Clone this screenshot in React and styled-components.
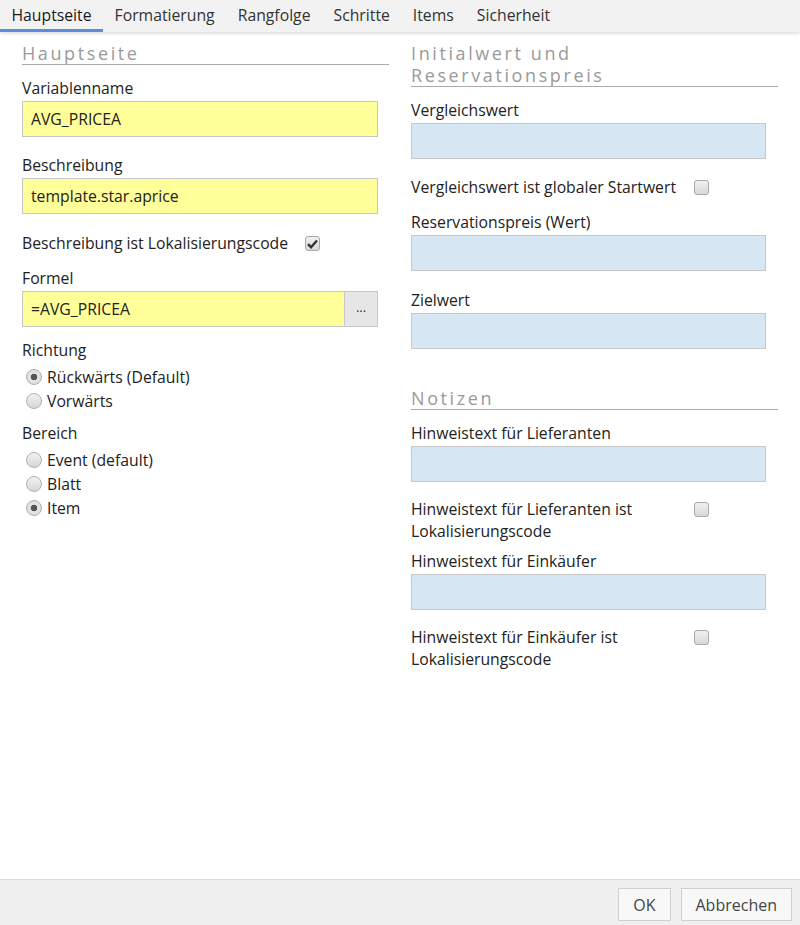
import React from 'react';
import styled, { createGlobalStyle } from 'styled-components';

const GlobalStyle = createGlobalStyle`
  html, body { margin: 0; padding: 0; }
  body {
    font-family: "Open Sans", "Liberation Sans", sans-serif;
    font-size: 15.75px;
    color: #333;
    background: #fff;
  }
`;

const tabs = ['Hauptseite', 'Formatierung', 'Rangfolge', 'Schritte', 'Items', 'Sicherheit'];

const App = () => {
  return (
    <Page>
      <GlobalStyle />
      <TabBar>
        {tabs.map((t, i) => (
          <Tab key={t} active={i === 0}>{t}</Tab>
        ))}
      </TabBar>

      <Content>
        <Column>
          <SectionTitle><TitleText>Hauptseite</TitleText></SectionTitle>

          <Label top={13}>Variablenname</Label>
          <TextInput tone="yellow" defaultValue="AVG_PRICEA" />

          <Label top={18}>Beschreibung</Label>
          <TextInput tone="yellow" defaultValue="template.star.aprice" />

          <CheckRow top={18}>
            <CheckLabel>Beschreibung ist Lokalisierungscode</CheckLabel>
            <CheckBox checked />
          </CheckRow>

          <Label top={14}>Formel</Label>
          <InputGroup>
            <GroupInput defaultValue="=AVG_PRICEA" />
            <DotsButton>...</DotsButton>
          </InputGroup>

          <Label top={13}>Richtung</Label>
          <RadioList>
            <RadioItem><Radio checked />Rückwärts (Default)</RadioItem>
            <RadioItem><Radio />Vorwärts</RadioItem>
          </RadioList>

          <Label top={10}>Bereich</Label>
          <RadioList>
            <RadioItem><Radio />Event (default)</RadioItem>
            <RadioItem><Radio />Blatt</RadioItem>
            <RadioItem><Radio checked />Item</RadioItem>
          </RadioList>
        </Column>

        <Column>
          <SectionTitle><TitleText>Initialwert und Reservationspreis</TitleText></SectionTitle>

          <Label top={13}>Vergleichswert</Label>
          <TextInput tone="blue" />

          <CheckRow top={17}>
            <CheckLabel>Vergleichswert ist globaler Startwert</CheckLabel>
            <CheckBox />
          </CheckRow>

          <Label top={14}>Reservationspreis (Wert)</Label>
          <TextInput tone="blue" />

          <Label top={19}>Zielwert</Label>
          <TextInput tone="blue" />

          <SectionTitle top={38}><TitleText>Notizen</TitleText></SectionTitle>

          <Label top={13}>Hinweistext für Lieferanten</Label>
          <TextInput tone="blue" />

          <CheckRow top={16}>
            <CheckLabel>Hinweistext für Lieferanten ist Lokalisierungscode</CheckLabel>
            <CheckBox />
          </CheckRow>

          <Label top={9}>Hinweistext für Einkäufer</Label>
          <TextInput tone="blue" />

          <CheckRow top={16}>
            <CheckLabel>Hinweistext für Einkäufer ist Lokalisierungscode</CheckLabel>
            <CheckBox />
          </CheckRow>
        </Column>
      </Content>

      <Footer>
        <FooterButton>OK</FooterButton>
        <FooterButton>Abbrechen</FooterButton>
      </Footer>
    </Page>
  );
};

const CheckBox = ({ checked }) => (
  <Box>
    {checked && (
      <svg width="11" height="10" viewBox="0 0 11 10">
        <path d="M1 5.2 L4 8.2 L10 1.5" fill="none" stroke="#333" strokeWidth="2.4" />
      </svg>
    )}
  </Box>
);

export default App;

const Page = styled.div`
  height: 925px;
  display: flex;
  flex-direction: column;
  overflow: hidden;
`;

const TabBar = styled.div`
  display: flex;
  height: 32px;
  background: #f2f2f2;
  box-shadow: 0 1px 4px rgba(0, 0, 0, 0.18);
  position: relative;
  z-index: 1;
`;

const Tab = styled.div`
  padding: 0 11.5px;
  line-height: 30px;
  font-size: 15.75px;
  color: ${(p) => (p.active ? '#1a1a1a' : '#333')};
  border-bottom: 3px solid ${(p) => (p.active ? '#5b8ed7' : 'transparent')};
  height: 29px;
  cursor: pointer;
`;

const Content = styled.div`
  flex: 1;
  display: grid;
  grid-template-columns: 367px 367px;
  column-gap: 22px;
  padding: 10px 22px 0;
`;

const Column = styled.div`
  display: flex;
  flex-direction: column;
`;

const SectionTitle = styled.div`
  margin-top: ${(p) => p.top || 0}px;
  font-size: 18px;
  line-height: 22px;
  letter-spacing: 2.6px;
  color: #9a9a9a;
  border-bottom: 1px solid #aaa;
`;

const TitleText = styled.span`
  display: block;
  max-width: 310px;
`;

const Label = styled.div`
  margin-top: ${(p) => p.top || 0}px;
  margin-bottom: 3px;
  line-height: 20px;
  color: #222;
`;

const TextInput = styled.input`
  box-sizing: border-box;
  width: ${(p) => (p.tone === 'yellow' ? 356 : 355)}px;
  height: 36px;
  padding: 0 8px;
  font-family: inherit;
  font-size: 15.75px;
  color: #222;
  border: 1px solid #c8c8c8;
  background: ${(p) => (p.tone === 'yellow' ? '#ffff99' : '#d6e6f3')};
  outline: none;
`;

const InputGroup = styled.div`
  display: flex;
  width: 356px;
  height: 36px;
`;

const GroupInput = styled.input`
  box-sizing: border-box;
  flex: 1;
  min-width: 0;
  height: 36px;
  padding: 0 8px;
  font-family: inherit;
  font-size: 15.75px;
  color: #222;
  border: 1px solid #c8c8c8;
  border-right: none;
  background: #ffff99;
  outline: none;
`;

const DotsButton = styled.button`
  box-sizing: border-box;
  width: 34px;
  height: 36px;
  border: 1px solid #c8c8c8;
  background: #e6e6e6;
  font-family: inherit;
  font-size: 13px;
  color: #333;
  padding: 0 0 4px;
`;

const CheckRow = styled.div`
  margin-top: ${(p) => p.top || 0}px;
  display: flex;
  align-items: flex-start;
`;

const CheckLabel = styled.div`
  width: 272px;
  line-height: 22px;
  color: #222;
`;

const Box = styled.span`
  box-sizing: border-box;
  width: 15px;
  height: 15px;
  margin: 4px 0 0 11px;
  border: 1px solid #a8a8a8;
  border-radius: 3px;
  background: linear-gradient(#f0f0f0, #d8d8d8);
  display: flex;
  align-items: center;
  justify-content: center;
`;

const RadioList = styled.div`
  margin-top: 2px;
  display: flex;
  flex-direction: column;
`;

const RadioItem = styled.div`
  display: flex;
  align-items: center;
  height: 24px;
  padding-left: 4px;
  color: #222;
`;

const Radio = styled.span`
  box-sizing: border-box;
  width: 16px;
  height: 16px;
  margin-right: 5px;
  border-radius: 50%;
  border: 1px solid #b0b0b0;
  background: ${(p) =>
    p.checked
      ? 'radial-gradient(circle, #555 0, #555 3px, #e4e4e4 3.6px, #d8d8d8 100%)'
      : 'linear-gradient(#f2f2f2, #d6d6d6)'};
`;

const Footer = styled.div`
  height: 46px;
  box-sizing: border-box;
  background: #f0f0f0;
  border-top: 1px solid #dcdcdc;
  display: flex;
  justify-content: flex-end;
  align-items: flex-start;
  gap: 10px;
  padding: 8px 8px 0 0;
`;

const FooterButton = styled.button`
  box-sizing: border-box;
  height: 33px;
  padding: 0 14px;
  border: 1px solid #cfcfcf;
  background: #f8f8f8;
  font-family: inherit;
  font-size: 16px;
  color: #444;
`;
